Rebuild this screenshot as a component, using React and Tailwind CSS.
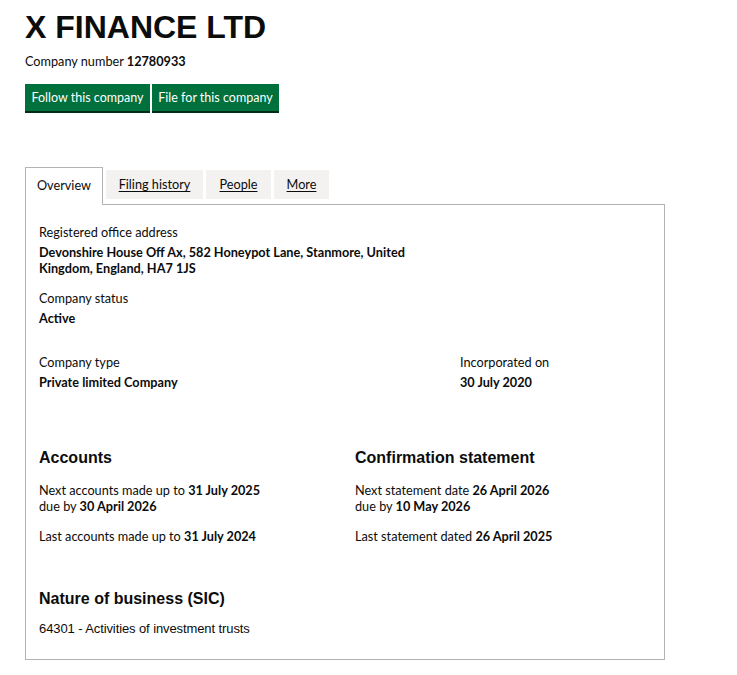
import React from "react";

const body = { fontFamily: "Lato, 'Noto Sans', Arial, sans-serif" };

function Label({ children }) {
  return <div className="text-[12.7px] leading-4 text-[#0b0c0c]">{children}</div>;
}
function Value({ children, className = "" }) {
  return <div className={"mt-1 text-[12.7px] leading-4 font-bold text-[#0b0c0c] " + className}>{children}</div>;
}

export default function App() {
  return (
    <div className="min-h-[675px] bg-white text-[#0b0c0c]" style={body}>
      <div className="ml-[25px] w-[640px] pt-[9px]">
        <h1 className="font-bold text-[32px] leading-[36px] font-['Liberation_Sans',Arial,sans-serif]">X FINANCE LTD</h1>
        <p className="mt-[8px] text-[12.7px] leading-4">
          Company number <strong className="font-bold">12780933</strong>
        </p>
        <div className="mt-[15px] flex gap-[2px]">
          <a className="block h-[27px] w-[125px] bg-[#00703c] text-white text-[12.5px] leading-[27px] text-center shadow-[0_2px_0_#002d18] cursor-pointer">
            Follow this company
          </a>
          <a className="block h-[27px] w-[127px] bg-[#00703c] text-white text-[12.5px] leading-[27px] text-center shadow-[0_2px_0_#002d18] cursor-pointer">
            File for this company
          </a>
        </div>

        <div className="mt-[56px] flex items-start gap-[3px]">
          <div className="relative z-10 -mb-px h-[38px] w-[78px] border border-b-0 border-[#b1b4b6] bg-white text-[12.7px] leading-[34px] text-center">
            Overview
          </div>
          <a className="mt-[3px] h-[29px] w-[97px] bg-[#f3f2f1] text-[12.7px] leading-[29px] text-center underline underline-offset-2">
            Filing history
          </a>
          <a className="mt-[3px] h-[29px] w-[65px] bg-[#f3f2f1] text-[12.7px] leading-[29px] text-center underline underline-offset-2">
            People
          </a>
          <a className="mt-[3px] h-[29px] w-[55px] bg-[#f3f2f1] text-[12.7px] leading-[29px] text-center underline underline-offset-2">
            More
          </a>
        </div>

        <div className="relative border border-[#b1b4b6] px-[13px] pt-[19px] pb-[22px]">
          <Label>Registered office address</Label>
          <Value>
            Devonshire House Off Ax, 582 Honeypot Lane, Stanmore, United
            <br />
            Kingdom, England, HA7 1JS
          </Value>

          <div className="mt-[14px]">
            <Label>Company status</Label>
            <Value>Active</Value>
          </div>

          <div className="mt-[28px] flex">
            <div className="w-[421px]">
              <Label>Company type</Label>
              <Value>Private limited Company</Value>
            </div>
            <div>
              <Label>Incorporated on</Label>
              <Value>30 July 2020</Value>
            </div>
          </div>

          <div className="mt-[58px] flex">
            <div className="w-[316px]">
              <h2 className="text-[16px] leading-5 font-bold font-['Liberation_Sans',Arial,sans-serif]">Accounts</h2>
              <p className="mt-[14px] text-[12.7px] leading-4">
                Next accounts made up to <strong>31 July 2025</strong>
                <br />
                due by <strong>30 April 2026</strong>
              </p>
              <p className="mt-[14px] text-[12.7px] leading-4">
                Last accounts made up to <strong>31 July 2024</strong>
              </p>
            </div>
            <div>
              <h2 className="text-[16px] leading-5 font-bold font-['Liberation_Sans',Arial,sans-serif]">Confirmation statement</h2>
              <p className="mt-[14px] text-[12.7px] leading-4">
                Next statement date <strong>26 April 2026</strong>
                <br />
                due by <strong>10 May 2026</strong>
              </p>
              <p className="mt-[14px] text-[12.7px] leading-4">
                Last statement dated <strong>26 April 2025</strong>
              </p>
            </div>
          </div>

          <h2 className="mt-[45px] text-[16px] leading-5 font-bold font-['Liberation_Sans',Arial,sans-serif]">Nature of business (SIC)</h2>
          <p className="mt-[12px] text-[13px] leading-4 tracking-[-0.1px] font-['Liberation_Sans',Arial,sans-serif]">
            64301 - Activities of investment trusts
          </p>
        </div>
      </div>
    </div>
  );
}
